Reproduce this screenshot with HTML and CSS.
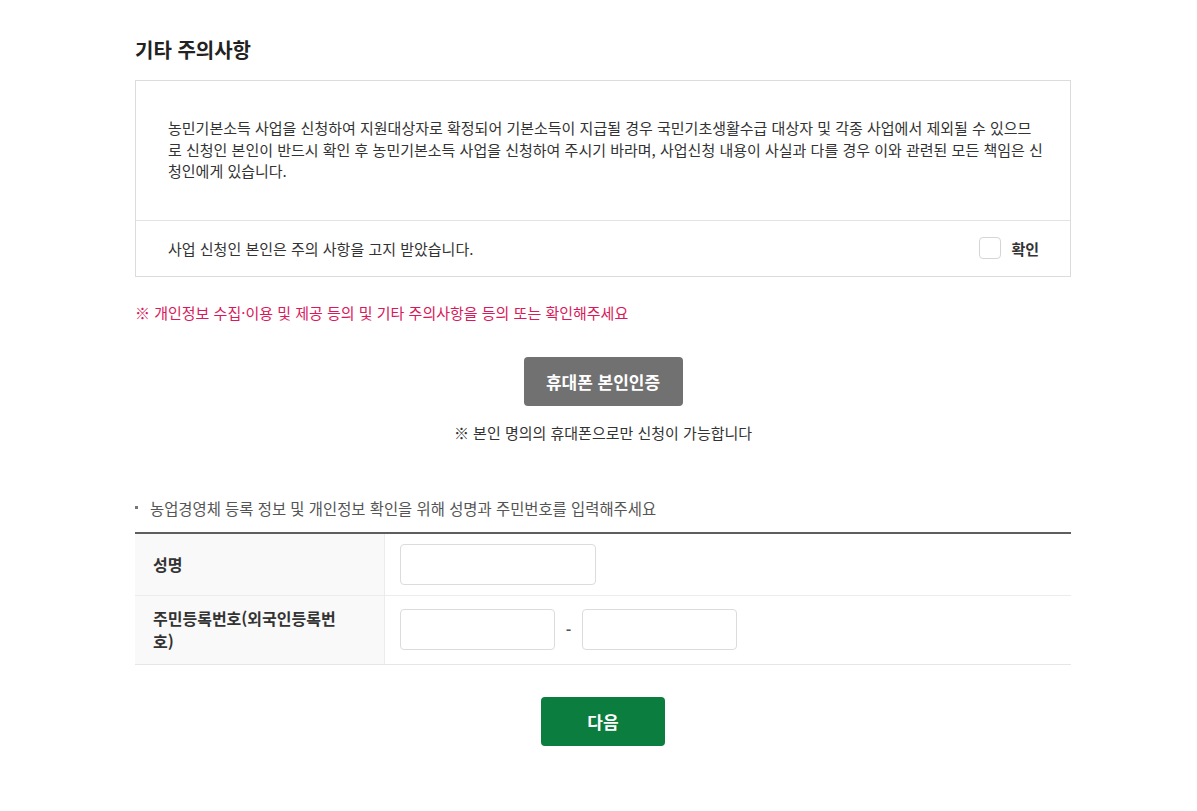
FILE: index.html
```html
<!DOCTYPE html>
<html lang="ko">
<head>
<meta charset="utf-8">
<title>기타 주의사항</title>
<link rel="stylesheet" href="styles.css">
</head>
<body>
<div class="page">
  <h2 class="title">기타 주의사항</h2>
  <div class="notice-box">
    <p class="notice-text">농민기본소득 사업을 신청하여 지원대상자로 확정되어 기본소득이 지급될 경우 국민기초생활수급 대상자 및 각종 사업에서 제외될 수 있으므로 신청인 본인이 반드시 확인 후 농민기본소득 사업을 신청하여 주시기 바라며, 사업신청 내용이 사실과 다를 경우 이와 관련된 모든 책임은 신청인에게 있습니다.</p>
    <div class="check-row">
      <span class="check-label">사업 신청인 본인은 주의 사항을 고지 받았습니다.</span>
      <label class="check"><span class="check-box"></span><span class="check-text">확인</span></label>
    </div>
  </div>
  <p class="warn">※ 개인정보 수집·이용 및 제공 등의 및 기타 주의사항을 등의 또는 확인해주세요</p>
  <div class="center">
    <button class="btn-gray" type="button">휴대폰 본인인증</button>
  </div>
  <p class="note">※ 본인 명의의 휴대폰으로만 신청이 가능합니다</p>
  <p class="bullet"><span class="dot"></span>농업경영체 등록 정보 및 개인정보 확인을 위해 성명과 주민번호를 입력해주세요</p>
  <div class="form-table">
    <div class="row row-name">
      <div class="label">성명</div>
      <div class="field"><span class="input input-name"></span></div>
    </div>
    <div class="row row-id">
      <div class="label">주민등록번호(외국인등록번호)</div>
      <div class="field"><span class="input input-id"></span><span class="dash">-</span><span class="input input-id"></span></div>
    </div>
  </div>
  <div class="center">
    <button class="btn-green" type="button">다음</button>
  </div>
</div>
</body>
</html>
```

FILE: styles.css
```css
* { box-sizing: border-box; }
html, body { margin: 0; padding: 0; background: #fff; }
body {
  font-family: "Noto Sans CJK KR", "Noto Sans", sans-serif;
  color: #333;
}
.page {
  width: 1071px;
  padding: 36px 0 0 135px;
}
.title {
  margin: 0;
  font-size: 20px;
  line-height: 28px;
  font-weight: 700;
  color: #222;
}
.notice-box {
  margin-top: 16px;
  border: 1px solid #dcdcdc;
}
.notice-text {
  margin: 0;
  padding: 36px 26px 38px 32px;
  font-size: 15px;
  line-height: 21.5px;
  color: #333;
  word-break: break-all;
  border-bottom: 1px solid #e3e3e3;
}
.check-row {
  height: 55px;
  display: flex;
  align-items: center;
  justify-content: space-between;
  padding: 0 31px 0 32px;
}
.check-label { font-size: 15px; color: #333; }
.check { display: flex; align-items: center; gap: 10px; }
.check-box {
  width: 22px; height: 22px;
  border: 1px solid #d5d5d5;
  border-radius: 4px;
  background: #fff;
}
.check-text { font-size: 15px; font-weight: 700; color: #333; }
.warn {
  margin: 26px 0 0;
  font-size: 15px;
  line-height: 20px;
  color: #d9195b;
}
.center { display: flex; justify-content: center; }
.btn-gray {
  margin-top: 34px;
  width: 159px; height: 49px;
  border: 0; border-radius: 4px;
  background: #717171;
  color: #fff;
  font-family: inherit;
  font-size: 17px; font-weight: 700;
}
.note {
  margin: 17px 0 0;
  text-align: center;
  font-size: 15px;
  line-height: 20px;
  color: #333;
}
.bullet {
  margin: 54px 0 0;
  display: flex;
  align-items: center;
  font-size: 15.4px;
  line-height: 22px;
  color: #555;
}
.dot {
  width: 3px; height: 3px;
  background: #777;
  margin: 0 12px 0 0;
}
.form-table {
  margin-top: 13px;
  border-top: 2px solid #5e5e5e;
  border-bottom: 1px solid #e6e6e6;
}
.row { display: flex; }
.row-name { height: 62px; border-bottom: 1px solid #ececec; }
.row-id { height: 68px; }
.label {
  width: 250px;
  flex: none;
  background: #f9f9f9;
  border-right: 1px solid #ececec;
  display: flex;
  align-items: center;
  padding: 0 32px 0 18px;
  font-size: 16px;
  line-height: 23px;
  font-weight: 700;
  color: #333;
}
.field {
  flex: 1;
  display: flex;
  align-items: center;
  padding-left: 15px;
}
.input {
  height: 41px;
  border: 1px solid #dcdcdc;
  border-radius: 4px;
  background: #fff;
}
.input-name { width: 196px; }
.input-id { width: 155px; }
.dash {
  width: 27px;
  text-align: center;
  font-size: 15px;
  font-weight: 700;
  color: #555;
}
.btn-green {
  margin-top: 32px;
  width: 124px; height: 49px;
  border: 0; border-radius: 4px;
  background: #0b7d3e;
  color: #fff;
  font-family: inherit;
  font-size: 17px; font-weight: 700;
}
```
